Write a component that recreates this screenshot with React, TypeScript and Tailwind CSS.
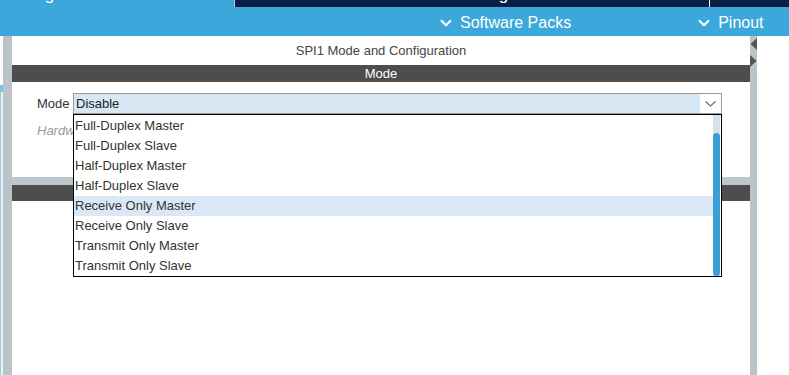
import { useState } from "react";

const modes = [
  "Full-Duplex Master",
  "Full-Duplex Slave",
  "Half-Duplex Master",
  "Half-Duplex Slave",
  "Receive Only Master",
  "Receive Only Slave",
  "Transmit Only Master",
  "Transmit Only Slave",
];

const Chevron = () => (
  <svg width="12" height="8" viewBox="0 0 12 8" className="shrink-0">
    <path d="M1 1.2 L6 6.2 L11 1.2" fill="none" stroke="white" strokeWidth="2.2" />
  </svg>
);

const App = () => {
  const [hovered] = useState(4);

  return (
    <div className="w-[789px] h-[375px] overflow-hidden bg-white font-['Liberation_Sans',Arial,sans-serif]">
      {/* Tabs (cut off at the top) */}
      <div className="flex h-[7px] overflow-hidden text-[17px] leading-[17px] text-white">
        <div className="w-[234px] shrink-0 bg-[#3ba7da] flex items-start">
          <span className="whitespace-nowrap mt-[-14px] ml-[-64px]">Pinout &amp; Configuration</span>
        </div>
        <div className="w-px shrink-0 bg-[#9fd2ec]"></div>
        <div className="w-[474px] shrink-0 bg-[#0b1f45] flex justify-center items-start">
          <span className="whitespace-nowrap mt-[-14px] ml-[28px]">Clock Configuration</span>
        </div>
        <div className="w-px shrink-0 bg-white"></div>
        <div className="flex-1 bg-[#0b1f45]"></div>
      </div>

      {/* Blue menu bar */}
      <div className="h-[29px] bg-[#3ba7da] flex items-center pt-[3px] pl-[440px] text-[16px] text-white">
        <div className="flex items-center gap-[8px]">
          <Chevron />
          <span className="whitespace-nowrap">Software Packs</span>
        </div>
        <div className="flex items-center gap-[8px] ml-[127px]">
          <Chevron />
          <span className="whitespace-nowrap">Pinout</span>
        </div>
      </div>

      {/* Body */}
      <div className="flex h-[339px]">
        <div className="w-[3px] flex flex-col">
          <div className="h-[49px] bg-white"></div>
          <div className="h-[7px] bg-[#7cc3e3]"></div>
          <div className="flex-1 bg-[#e2f4fa] border-l border-[#9fc9d9]"></div>
        </div>
        <div className="w-[9px] bg-[#b9c3c8]"></div>

        {/* Panel */}
        <div className="w-[738px] flex flex-col text-[13px]">
          <div className="h-[29px] flex items-center justify-center text-[#444]">
            SPI1 Mode and Configuration
          </div>
          <div className="h-[17px] bg-[#4d4d4d] flex items-center justify-center text-white">
            Mode
          </div>

          <div className="h-[95px] pl-[25px] pt-[11px]">
            <div className="flex items-center">
              <span className="w-[36px] text-[#333]">Mode</span>
              <div className="relative h-[21px]">
                <div className="w-[649px] h-[21px] border border-[#9a9a9a] bg-[#d8e7f4] flex items-center">
                  <span className="flex-1 pl-[2px] text-[#222]">Disable</span>
                  <div className="w-[21px] h-full bg-white flex items-center justify-center">
                    <svg width="11" height="6" viewBox="0 0 11 6">
                      <path d="M0.5 0.5 L5.5 5 L10.5 0.5" fill="none" stroke="#6b6b6b" strokeWidth="1.2" />
                    </svg>
                  </div>
                </div>

                {/* Open dropdown */}
                <div className="absolute top-[21px] left-0 z-10 w-[649px] border border-black bg-white flex">
                  <div className="flex-1 pt-px">
                    {modes.map((mode, i) => (
                      <div
                        key={mode}
                        className={
                          i === hovered
                            ? "h-[20px] leading-[20px] pl-[1px] text-[#333] bg-[#dae8f5]"
                            : "h-[20px] leading-[20px] pl-[1px] text-[#333]"
                        }
                      >
                        {mode}
                      </div>
                    ))}
                  </div>
                  <div className="w-[7px] mr-[1px] bg-[#d9e1e6] flex flex-col">
                    <div className="h-[18px]"></div>
                    <div className="flex-1 bg-[#3b9fd6] rounded-full"></div>
                  </div>
                </div>
              </div>
            </div>
            <div className="mt-[7px] h-[20px] leading-[20px] italic text-[#9a9a9a]">
              Hardware NSS Signal
            </div>
          </div>

          <div className="h-[8px] bg-[#bdc6ca]"></div>
          <div className="h-[16px] bg-[#4d4d4d]"></div>
          <div className="flex-1 bg-white"></div>
        </div>

        {/* Right collapse strip */}
        <div className="w-[7px] bg-[#b9c3c8]">
          <svg width="7" height="32" viewBox="0 0 7 32">
            <polygon points="7,2 0.5,8 7,14" fill="#555" />
            <polygon points="0,19 6.5,25 0,31" fill="#555" />
          </svg>
        </div>
        <div className="flex-1 bg-white"></div>
      </div>
    </div>
  );
};

export default App;
